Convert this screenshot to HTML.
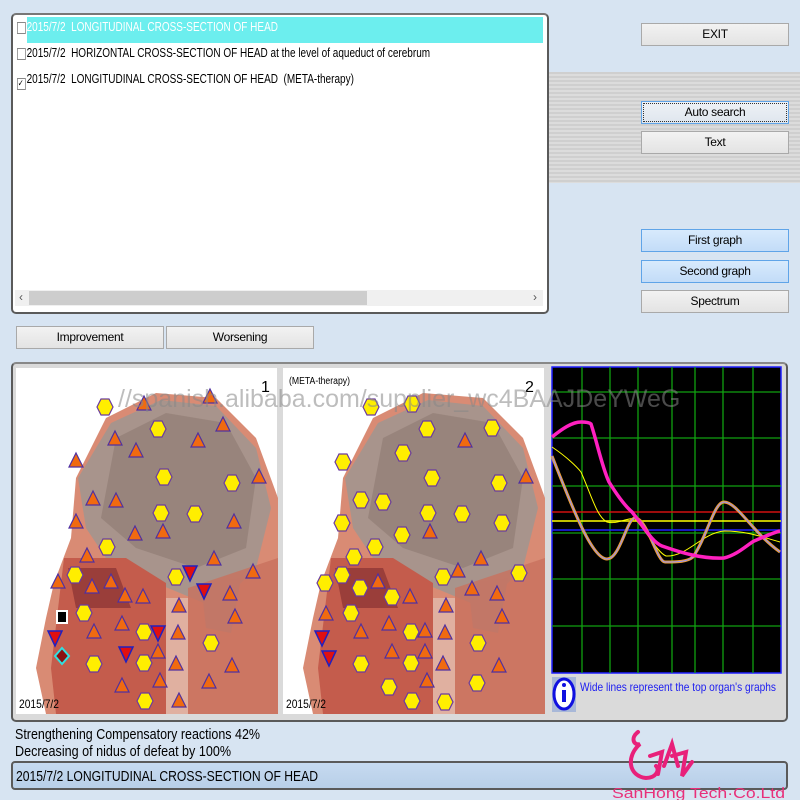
<!DOCTYPE html>
<html><head><meta charset="utf-8"><style>
body{margin:0;width:800px;height:800px;background:#d7e4f2;position:relative;overflow:hidden;font-family:"Liberation Sans",sans-serif;}
.abs{position:absolute}
.btn{position:absolute;width:146px;height:21px;border:1px solid #a9a9a9;background:linear-gradient(#f2f2f2,#e3e3e3);font-size:12px;text-align:center;line-height:21px;color:#000;box-sizing:content-box;letter-spacing:-0.3px}
.blue{background:linear-gradient(#d8eafc,#c3dcf8);border-color:#5fa4e8}
.row{position:absolute;left:17px;height:26px;font-size:12.5px;line-height:24px;white-space:nowrap;transform:scaleX(0.8);transform-origin:0 0}
.cb{display:inline-block;width:9px;height:10px;border:1px solid #888;background:#fff;vertical-align:-3px;margin-right:1px;font-size:9px;line-height:9px}
</style></head><body>
<div class="abs" style="left:548px;top:72px;width:252px;height:111px;background:repeating-linear-gradient(#cfcfcf 0 2px,#dcdcdc 2px 4px)"></div>
<div class="abs" style="left:11px;top:13px;width:534px;height:297px;border:2px solid #5a5a5a;border-radius:5px;background:#fff;border-top-color:#777"></div>
<div class="abs" style="left:27px;top:17px;width:516px;height:26px;background:#6ceeee"></div>
<div class="row" style="top:15px;color:#fff"><span class="cb"></span>2015/7/2&nbsp; LONGITUDINAL CROSS-SECTION OF HEAD</div>
<div class="row" style="top:41px"><span class="cb"></span>2015/7/2&nbsp; HORIZONTAL CROSS-SECTION OF HEAD at the level of aqueduct of cerebrum</div>
<div class="row" style="top:67px"><span class="cb">✓</span>2015/7/2&nbsp; LONGITUDINAL CROSS-SECTION OF HEAD&nbsp; (META-therapy)</div>
<div class="abs" style="left:15px;top:290px;width:528px;height:16px;background:#f0f0f0"></div>
<div class="abs" style="left:29px;top:291px;width:338px;height:14px;background:#cdcdcd"></div>
<div class="abs" style="left:19px;top:290px;font-size:12px;color:#555">‹</div>
<div class="abs" style="left:533px;top:290px;font-size:12px;color:#555">›</div>
<div class="btn" style="left:641px;top:23px">EXIT</div>
<div class="btn blue" style="left:641px;top:101px;outline:1px dotted #333;outline-offset:-3px;background:linear-gradient(#eef2f6,#dfe6ee)">Auto search</div>
<div class="btn" style="left:641px;top:131px">Text</div>
<div class="btn blue" style="left:641px;top:229px">First graph</div>
<div class="btn blue" style="left:641px;top:260px">Second graph</div>
<div class="btn" style="left:641px;top:290px">Spectrum</div>
<div class="btn" style="left:16px;top:326px">Improvement</div>
<div class="btn" style="left:166px;top:326px">Worsening</div>
<div class="abs" style="left:11px;top:362px;width:773px;height:356px;border:2px solid #5a5a5a;border-radius:5px;background:#dadada;border-top-color:#888"></div>
<svg class="abs" style="left:0;top:0" width="800" height="800">
<defs>
<polygon id="h" points="-4,-8 4,-8 8,0 4,8 -4,8 -8,0" fill="#ffee00" stroke="#6a3aa0" stroke-width="1.2"/>
<polygon id="t" points="0,-9 7,5 -7,5" fill="#f06a10" stroke="#5030a0" stroke-width="1.2"/>
<polygon id="d" points="-7,-6 7,-6 0,9" fill="#e01010" stroke="#2020c0" stroke-width="1.5"/>
<g id="head">
<rect width="261" height="346" fill="#fff"/>
<path d="M30 346 L20 300 L30 250 L38 215 L55 170 L60 110 L90 50 L140 25 L200 30 L240 70 L262 130 L262 346 Z" fill="#d98b74"/>
<path d="M62 110 L95 55 L145 32 L200 38 L240 80 L255 140 L240 200 L200 240 L140 215 L90 190 L70 160 Z" fill="#a8948c"/>
<path d="M100 70 L150 45 L210 55 L240 110 L230 180 L180 200 L120 180 L85 150 Z" fill="#8e7a72" opacity=".6"/>
<path d="M48 190 L110 190 L150 215 L150 346 L40 346 L35 300 Z" fill="#c45c4c"/>
<path d="M52 200 L100 200 L115 240 L60 240 Z" fill="#9a3e3a"/>
<path d="M185 215 L225 210 L215 265 L190 260 Z" fill="#a8938a"/>
<rect x="150" y="230" width="22" height="116" fill="#e0b0a0"/>
<path d="M172 220 L262 190 L262 346 L172 346 Z" fill="#c8705e" opacity=".8"/>
</g>
</defs>
<g transform="translate(16,368)">
<use href="#head"/>
<use href="#h" x="89" y="39"/><use href="#h" x="142" y="61"/><use href="#h" x="148" y="109"/><use href="#h" x="216" y="115"/><use href="#h" x="145" y="145"/><use href="#h" x="179" y="146"/><use href="#h" x="91" y="179"/><use href="#h" x="59" y="207"/><use href="#h" x="160" y="209"/><use href="#h" x="68" y="245"/><use href="#h" x="128" y="264"/><use href="#h" x="195" y="275"/><use href="#h" x="78" y="296"/><use href="#h" x="128" y="295"/><use href="#h" x="129" y="333"/>
<use href="#t" x="128" y="37"/><use href="#t" x="194" y="30"/><use href="#t" x="207" y="58"/><use href="#t" x="99" y="72"/><use href="#t" x="182" y="74"/><use href="#t" x="120" y="84"/><use href="#t" x="60" y="94"/><use href="#t" x="243" y="110"/><use href="#t" x="77" y="132"/><use href="#t" x="100" y="134"/><use href="#t" x="60" y="155"/><use href="#t" x="218" y="155"/><use href="#t" x="119" y="167"/><use href="#t" x="147" y="165"/><use href="#t" x="71" y="189"/><use href="#t" x="198" y="192"/><use href="#t" x="237" y="205"/><use href="#t" x="42" y="215"/><use href="#t" x="76" y="220"/><use href="#t" x="95" y="215"/><use href="#t" x="109" y="229"/><use href="#t" x="127" y="230"/><use href="#t" x="214" y="227"/><use href="#t" x="163" y="239"/><use href="#t" x="219" y="250"/><use href="#t" x="106" y="257"/><use href="#t" x="78" y="265"/><use href="#t" x="162" y="266"/><use href="#t" x="142" y="285"/><use href="#t" x="216" y="299"/><use href="#t" x="160" y="297"/><use href="#t" x="106" y="319"/><use href="#t" x="144" y="314"/><use href="#t" x="193" y="315"/><use href="#t" x="163" y="334"/>
<use href="#d" x="174" y="204"/><use href="#d" x="188" y="222"/><use href="#d" x="142" y="264"/><use href="#d" x="39" y="269"/><use href="#d" x="110" y="285"/>
<rect x="41" y="243" width="10" height="12" fill="#000" stroke="#fff" stroke-width="2"/>
<polygon points="46,280 53,288 46,296 39,288" fill="#8a1010" stroke="#30e0e0" stroke-width="2"/>
<text x="245" y="24" font-size="16">1</text>
<text x="3" y="340" font-size="12" textLength="40" lengthAdjust="spacingAndGlyphs">2015/7/2</text>
</g>
<g transform="translate(283,368)">
<use href="#head"/>
<use href="#h" x="88" y="39"/><use href="#h" x="129" y="36"/><use href="#h" x="144" y="61"/><use href="#h" x="209" y="60"/><use href="#h" x="120" y="85"/><use href="#h" x="60" y="94"/><use href="#h" x="149" y="110"/><use href="#h" x="216" y="115"/><use href="#h" x="78" y="132"/><use href="#h" x="100" y="134"/><use href="#h" x="145" y="145"/><use href="#h" x="179" y="146"/><use href="#h" x="59" y="155"/><use href="#h" x="219" y="155"/><use href="#h" x="119" y="167"/><use href="#h" x="92" y="179"/><use href="#h" x="71" y="189"/><use href="#h" x="59" y="207"/><use href="#h" x="77" y="220"/><use href="#h" x="160" y="209"/><use href="#h" x="236" y="205"/><use href="#h" x="42" y="215"/><use href="#h" x="109" y="229"/><use href="#h" x="68" y="245"/><use href="#h" x="128" y="264"/><use href="#h" x="195" y="275"/><use href="#h" x="78" y="296"/><use href="#h" x="128" y="295"/><use href="#h" x="194" y="315"/><use href="#h" x="106" y="319"/><use href="#h" x="129" y="333"/><use href="#h" x="162" y="334"/>
<use href="#t" x="182" y="74"/><use href="#t" x="243" y="110"/><use href="#t" x="147" y="165"/><use href="#t" x="198" y="192"/><use href="#t" x="175" y="204"/><use href="#t" x="189" y="222"/><use href="#t" x="95" y="215"/><use href="#t" x="127" y="230"/><use href="#t" x="214" y="227"/><use href="#t" x="163" y="239"/><use href="#t" x="219" y="250"/><use href="#t" x="106" y="257"/><use href="#t" x="78" y="265"/><use href="#t" x="142" y="264"/><use href="#t" x="162" y="266"/><use href="#t" x="142" y="285"/><use href="#t" x="216" y="299"/><use href="#t" x="160" y="297"/><use href="#t" x="144" y="314"/><use href="#t" x="109" y="285"/><use href="#t" x="43" y="247"/>
<use href="#d" x="39" y="269"/><use href="#d" x="46" y="289"/>
<text x="6" y="16" font-size="10" textLength="61" lengthAdjust="spacingAndGlyphs">(META-therapy)</text>
<text x="242" y="24" font-size="16">2</text>
<text x="3" y="340" font-size="12" textLength="40" lengthAdjust="spacingAndGlyphs">2015/7/2</text>
</g>
<g transform="translate(552,367)">
<rect width="229" height="306" fill="#000" stroke="#2020ff" stroke-width="1.5"/>
<g stroke="#10a010" stroke-width="1.3">
<line x1="30" y1="0" x2="30" y2="306"/><line x1="58" y1="0" x2="58" y2="306"/><line x1="86" y1="0" x2="86" y2="306"/><line x1="120" y1="0" x2="120" y2="306"/><line x1="143" y1="0" x2="143" y2="306"/><line x1="171" y1="0" x2="171" y2="306"/><line x1="201" y1="0" x2="201" y2="306"/>
<line x1="0" y1="25" x2="229" y2="25"/><line x1="0" y1="71" x2="229" y2="71"/><line x1="0" y1="119" x2="229" y2="119"/><line x1="0" y1="166" x2="229" y2="166"/><line x1="0" y1="212" x2="229" y2="212"/><line x1="0" y1="259" x2="229" y2="259"/>
</g>
<line x1="0" y1="145" x2="229" y2="145" stroke="#d01010" stroke-width="1.5"/>
<line x1="0" y1="154" x2="229" y2="154" stroke="#ffff00" stroke-width="1.5"/>
<line x1="0" y1="163" x2="229" y2="163" stroke="#2020ff" stroke-width="1.5"/>
<path d="M0 80 C15 90 25 100 29 105 C40 130 45 150 55 155 C65 158 75 150 83 152 C95 165 105 185 114 189 C135 190 150 166 172 164 C195 164 210 170 228 175" fill="none" stroke="#ffff00" stroke-width="1"/>
<path d="M0 89 C20 140 40 192 55 192 C68 192 75 151 83 151 C95 151 105 195 113 195 C125 195 135 195 141 190 C155 170 162 135 172 135 C185 135 200 165 228 185" fill="none" stroke="#f0a030" stroke-width="3"/>
<path d="M0 89 C20 140 40 192 55 192 C68 192 75 151 83 151 C95 151 105 195 113 195 C125 195 135 195 141 190 C155 170 162 135 172 135 C185 135 200 165 228 185" fill="none" stroke="#9090ff" stroke-width="1"/>
<path d="M0 70 C10 62 20 55 29 55 C35 55 38 56 39 57 C45 75 50 100 57 115 C65 128 72 138 80 145 C92 160 100 175 110 179 C130 186 150 192 172 191 C185 188 195 178 202 174 C212 170 220 166 228 164" fill="none" stroke="#ff20c0" stroke-width="3.5"/>
</g>
<rect x="552" y="677" width="24" height="35" fill="#a8b8d8"/>
<ellipse cx="564" cy="694" rx="10" ry="15" fill="#fff" stroke="#1010e0" stroke-width="3"/>
<rect x="562" y="690" width="4" height="12" fill="#1010e0"/><circle cx="564" cy="685" r="2" fill="#1010e0"/>
<text x="580" y="691" font-size="12" fill="#2020f0" textLength="196" lengthAdjust="spacingAndGlyphs">Wide lines represent the top organ's graphs</text>
<text x="118" y="407" font-size="25" fill="#888" opacity=".55">//spanish.alibaba.com/supplier_wc4BAAJDeYWeG</text>
<text x="15" y="739" font-size="15" textLength="245" lengthAdjust="spacingAndGlyphs">Strengthening Compensatory reactions 42%</text>
<text x="15" y="756" font-size="15" textLength="216" lengthAdjust="spacingAndGlyphs">Decreasing of nidus of defeat by 100%</text>
</svg>
<div class="abs" style="left:11px;top:761px;width:773px;height:25px;border:2px solid #5a5a5a;border-radius:4px;background:linear-gradient(#c6daf0,#b8cfe8)"></div>
<svg class="abs" style="left:0;top:0" width="800" height="800">
<text x="16" y="781" font-size="15" textLength="302" lengthAdjust="spacingAndGlyphs">2015/7/2 LONGITUDINAL CROSS-SECTION OF HEAD</text>
<path d="M638 732 C630 738 634 746 640 744 C626 756 628 776 646 778 C656 778 660 770 656 766 M650 756 L662 752 L658 774 M664 766 L672 744 L678 766 M672 756 L686 752 L682 776 L692 762" fill="none" stroke="#e8207a" stroke-width="4" stroke-linecap="round"/>
<text x="612" y="798" font-size="15" fill="#e8307a" textLength="173" lengthAdjust="spacingAndGlyphs">SanHong Tech·Co.Ltd</text>
</svg>
</body></html>
